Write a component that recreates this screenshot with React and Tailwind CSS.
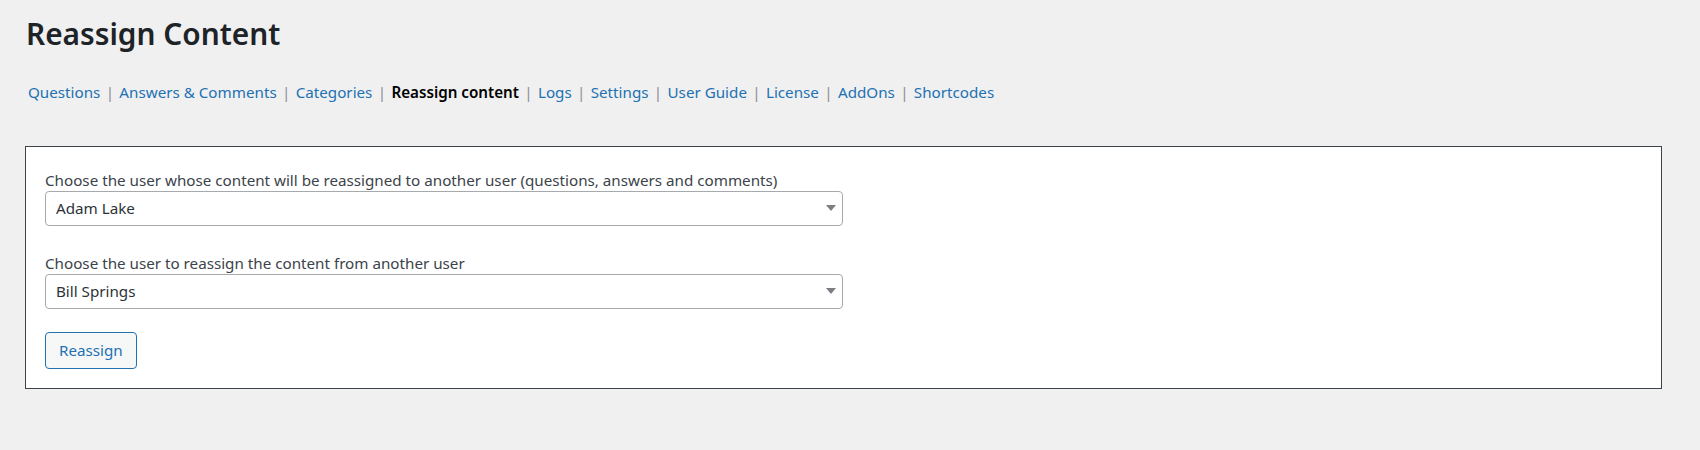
import React, { useState } from 'react';

const tabs = [
  'Questions',
  'Answers & Comments',
  'Categories',
  'Reassign content',
  'Logs',
  'Settings',
  'User Guide',
  'License',
  'AddOns',
  'Shortcodes',
];

const users = ['Adam Lake', 'Bill Springs', 'Carla Moore', 'Dana White'];

const UserSelect = ({ label, value, onChange }) => (
  <div>
    <label className="block text-[15.2px] leading-[20px] text-[#3c434a]">{label}</label>
    <div className="relative mt-[1px] w-[798px]">
      <select
        className="block h-[35px] w-full appearance-none rounded-[4px] border border-[#a7aaad] bg-white pl-[10px] pr-[30px] text-[15.2px] text-[#2c3338] outline-none"
        value={value}
        onChange={e => onChange(e.target.value)}
      >
        {users.map(u => (
          <option key={u} value={u}>{u}</option>
        ))}
      </select>
      <svg className="pointer-events-none absolute right-[7px] top-[14px]" width="10" height="6" viewBox="0 0 10 6">
        <path d="M0 0h10L5 6z" fill="#7b7e82" />
      </svg>
    </div>
  </div>
);

const App = () => {
  const [fromUser, setFromUser] = useState('Adam Lake');
  const [toUser, setToUser] = useState('Bill Springs');

  return (
    <div className="min-h-[450px] bg-[#f0f0f1] pl-[25px] pr-[38px] pt-[14px] font-['Noto_Sans',sans-serif]">
      <h1 className="pl-[1px] text-[29.8px] font-semibold leading-[40px] text-[#1d2327]">Reassign Content</h1>

      <nav className="mt-[27px] flex items-center gap-[8px] pl-[3px] text-[15.2px] leading-[22px]">
        {tabs.map((t, i) => (
          <React.Fragment key={t}>
            {i > 0 && <span className="flex w-[3px] justify-center text-[#8c8f94]">|</span>}
            {t === 'Reassign content' ? (
              <span className="font-semibold text-black">{t}</span>
            ) : (
              <a href="#" className="text-[#2271b1]">{t}</a>
            )}
          </React.Fragment>
        ))}
      </nav>

      <div className="mt-[43px] border border-[#3c434a] bg-white px-[19px] pb-[19px] pt-[23px]">
        <UserSelect
          label="Choose the user whose content will be reassigned to another user (questions, answers and comments)"
          value={fromUser}
          onChange={setFromUser}
        />
        <div className="mt-[27px]">
          <UserSelect
            label="Choose the user to reassign the content from another user"
            value={toUser}
            onChange={setToUser}
          />
        </div>
        <button className="mt-[23px] h-[37px] rounded-[4px] border border-[#2271b1] bg-[#f6f7f7] px-[13px] text-[15.2px] text-[#2271b1]">
          Reassign
        </button>
      </div>
    </div>
  );
};

export default App;
